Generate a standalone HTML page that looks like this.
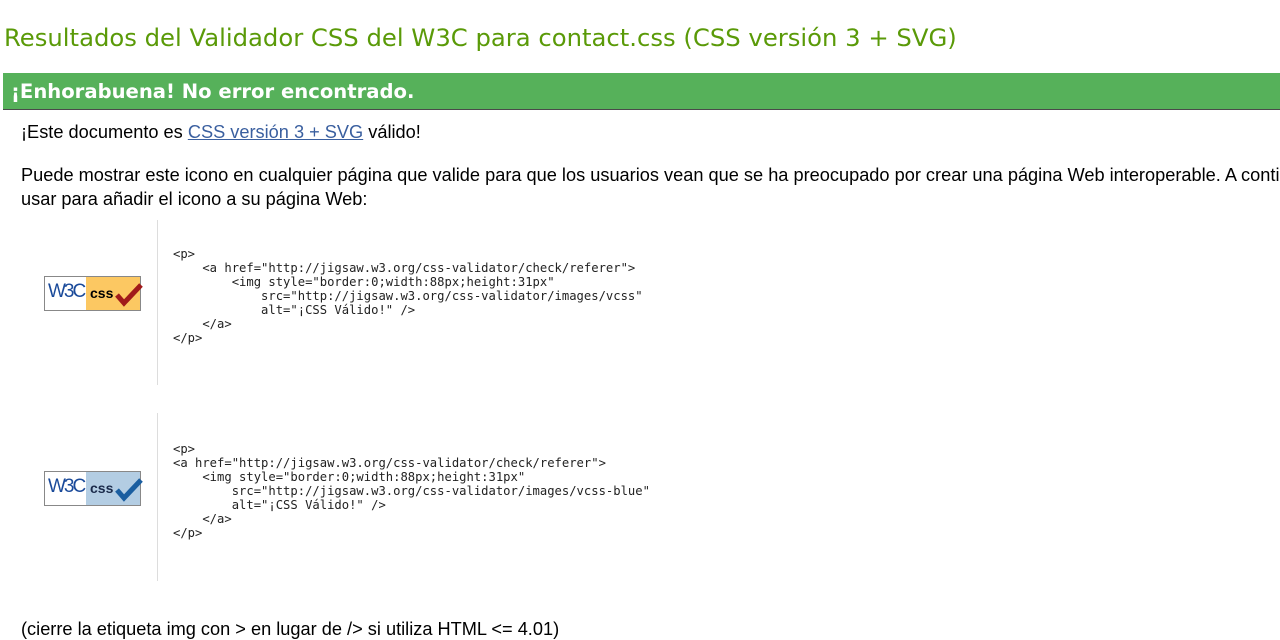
<!DOCTYPE html>
<html><head><meta charset="utf-8"><style>
body{margin:0;background:#fff;font-family:"Liberation Sans",Arial,sans-serif;color:#000;width:1280px;height:635px;overflow:hidden;position:relative}
.a{position:absolute;white-space:nowrap}
h1{position:absolute;left:4px;top:23px;margin:0;font-weight:normal;font-size:24.3px;color:#5a9a08;font-family:"DejaVu Sans",Verdana,sans-serif;white-space:nowrap}
.bar{position:absolute;left:3px;top:73px;width:1277px;height:36px;background:#56b15a;border-bottom:1px solid #4a4a4a}
.bar span{position:absolute;left:8px;top:7px;color:#fff;font-weight:bold;font-size:19.6px;font-family:"DejaVu Sans",Verdana,sans-serif;white-space:nowrap}
p.t{font-size:18.2px;margin:0}
a{color:#3a5f9f}
pre{position:absolute;margin:0;font-family:"DejaVu Sans Mono","Liberation Mono",monospace;font-size:12.2px;line-height:14px;color:#222}
.vl{position:absolute;left:157px;width:1px;background:#ddd}
.badge{position:absolute;width:97px;height:35px;border:1px solid #888;box-sizing:border-box;background:#fff;font-weight:bold;display:flex}
</style></head><body>
<h1>Resultados del Validador CSS del W3C para contact.css (CSS versión 3 + SVG)</h1>
<div class="bar"><span>¡Enhorabuena! No error encontrado.</span></div>
<p class="t a" style="left:21px;top:122px">¡Este documento es <a href="#">CSS versión 3 + SVG</a> válido!</p>
<p class="t a" style="left:21px;top:165px">Puede mostrar este icono en cualquier página que valide para que los usuarios vean que se ha preocupado por crear una página Web interoperable. A continuación</p>
<p class="t a" style="left:21px;top:189px">usar para añadir el icono a su página Web:</p>
<div class="vl" style="top:220px;height:165px"></div>
<div class="vl" style="top:413px;height:168px"></div>
<div class="badge" style="left:44px;top:276px"><div style="width:38px;color:#1a4a9a;font-size:19px;padding:4px 0 0 3px;letter-spacing:-2px;font-family:'Liberation Sans Narrow','Liberation Sans',sans-serif;font-weight:normal">W3C</div><div style="flex:1;background:#fcc862;position:relative;font-size:14px;padding:8px 0 0 4px">css<svg style="position:absolute;right:-4px;top:6px" width="30" height="24" viewBox="0 0 30 24"><path d="M3 12 L10 20 L27 2" stroke="#a11a1a" stroke-width="5" fill="none"/></svg></div></div>
<div class="badge" style="left:44px;top:471px"><div style="width:38px;color:#1a4a9a;font-size:19px;padding:4px 0 0 3px;letter-spacing:-2px;font-family:'Liberation Sans Narrow','Liberation Sans',sans-serif;font-weight:normal">W3C</div><div style="flex:1;background:#b3cde3;position:relative;font-size:14px;padding:8px 0 0 4px;color:#1a2a4a">css<svg style="position:absolute;right:-4px;top:6px" width="30" height="24" viewBox="0 0 30 24"><path d="M3 12 L10 20 L27 2" stroke="#1a5ea0" stroke-width="5" fill="none"/></svg></div></div>
<pre style="left:173px;top:247px">&lt;p&gt;
    &lt;a href="http://jigsaw.w3.org/css-validator/check/referer"&gt;
        &lt;img style="border:0;width:88px;height:31px"
            src="http://jigsaw.w3.org/css-validator/images/vcss"
            alt="¡CSS Válido!" /&gt;
    &lt;/a&gt;
&lt;/p&gt;</pre>
<pre style="left:173px;top:442px">&lt;p&gt;
&lt;a href="http://jigsaw.w3.org/css-validator/check/referer"&gt;
    &lt;img style="border:0;width:88px;height:31px"
        src="http://jigsaw.w3.org/css-validator/images/vcss-blue"
        alt="¡CSS Válido!" /&gt;
    &lt;/a&gt;
&lt;/p&gt;</pre>
<p class="t a" style="left:21px;top:619px">(cierre la etiqueta img con &gt; en lugar de /&gt; si utiliza HTML &lt;= 4.01)</p>
</body></html>
